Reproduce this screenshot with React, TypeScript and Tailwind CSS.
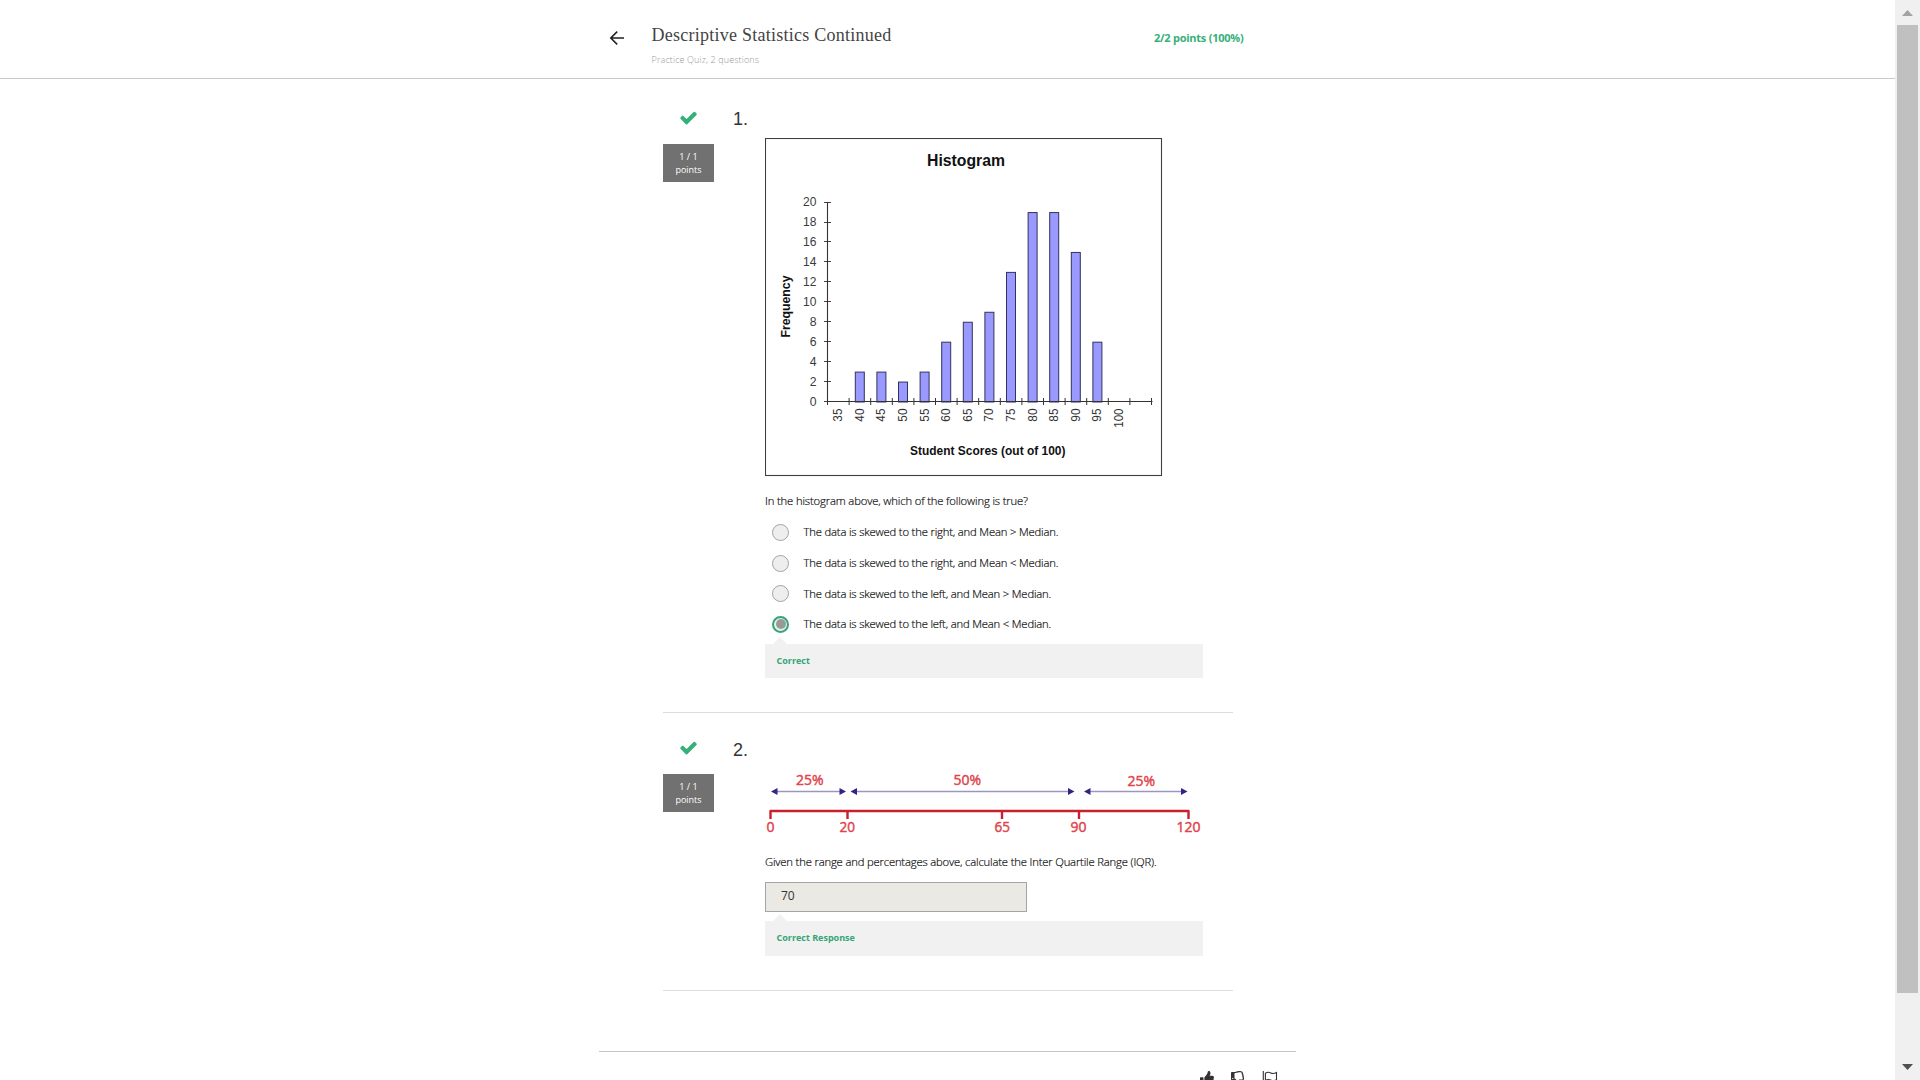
import { FaThumbsUp, FaRegThumbsDown } from "react-icons/fa";

const bars = [0, 3, 3, 2, 3, 6, 8, 9, 13, 19, 19, 15, 6, 0];
const step = 21.6;

function Histogram() {
  const y = (v: number) => 264 - v * 9.97;
  return (
    <svg width="398" height="339" viewBox="0 0 398 339" className="block shrink-0" fontFamily="Liberation Sans, Arial, sans-serif">
      <rect x="0.5" y="0.5" width="396" height="337" fill="#fff" stroke="#3f3f3f" strokeWidth="1.1" />
      <text x="162" y="28" fontSize="16" fontWeight="700" fill="#111" textLength="78" lengthAdjust="spacingAndGlyphs">Histogram</text>
      {Array.from({ length: 11 }, (_, i) => i * 2).map((v) => (
        <g key={v}>
          <path d={`M59 ${Math.round(y(v)) - 0.5}h7`} stroke="#444" strokeWidth="1" />
          <text x="51.5" y={y(v) + 3.5} textAnchor="end" fontSize="13" fill="#3c3c3c" textLength={v > 9 ? 13.4 : 6.8} lengthAdjust="spacingAndGlyphs">{v}</text>
        </g>
      ))}
      {bars.map((v, i) =>
        v ? <rect key={i} x={90.3 + (i - 1) * step} y={y(v)} width="9" height={264 - y(v)} fill="#9999ff" stroke="#33335c" strokeWidth="1" /> : null
      )}
      <path d="M62.5 64V264M62 263.5H387.5" stroke="#333" strokeWidth="1.1" fill="none" />
      {Array.from({ length: 16 }, (_, i) => (
        <path key={i} d={`M${62.5 + i * step} 260v7`} stroke="#333" strokeWidth="1" />
      ))}
      {bars.map((_, i) => (
        <text key={i} transform={`translate(${77.2 + i * step} 270.5) rotate(-90)`} textAnchor="end" fontSize="13" fill="#333" textLength={i === 13 ? 19.3 : 13.2} lengthAdjust="spacingAndGlyphs">{35 + i * 5}</text>
      ))}
      <text transform="translate(24.8 199.5) rotate(-90)" fontSize="12.4" fontWeight="700" fill="#111" textLength="62" lengthAdjust="spacingAndGlyphs">Frequency</text>
      <text x="145" y="317" fontSize="12.4" fontWeight="700" fill="#111" textLength="155.5" lengthAdjust="spacingAndGlyphs">Student Scores (out of 100)</text>
    </svg>
  );
}

function Arrow({ a, b }: { a: number; b: number }) {
  return (
    <g fill="#2e2584">
      <path d={`M${a + 3} 21.5H${b - 3}`} stroke="#9a96c4" strokeWidth="1.7" />
      <path d={`M${a} 21.5l6.5-3.4v6.8zM${b} 21.5l-6.5-3.4v6.8z`} />
    </g>
  );
}

const lineLabels: [string, number, number, number][] = [
  ["25%", 31, 15.3, 27.5], ["50%", 188.5, 14.8, 27.5], ["25%", 362.5, 15.9, 27.5],
  ["0", 1.5, 62.2, 8], ["20", 74.5, 62.2, 15.5], ["65", 229.5, 62.2, 15.5], ["90", 305.5, 62.2, 16], ["120", 411.5, 62.2, 24],
];

function NumberLine() {
  return (
    <svg width="440" height="66" viewBox="0 0 440 66" className="block shrink-0" fontFamily="Open Sans, sans-serif">
      <Arrow a={6} b={81} />
      <Arrow a={85.5} b={309.5} />
      <Arrow a={319} b={422.5} />
      <path d="M5.5 49V41H423.5V49M82.5 41v8M237 41v8M314 41v8" fill="none" stroke="#c8202f" strokeWidth="2.4" strokeLinejoin="round" />
      {lineLabels.map(([t, x, y, w], i) => (
        <text key={i} x={x} y={y} fontSize="14" fill="#e0444c" stroke="#e0444c" strokeWidth="0.45" textLength={w} lengthAdjust="spacingAndGlyphs">{t}</text>
      ))}
    </svg>
  );
}

function Status({ top }: { top: string }) {
  return (
    <div className={`flex w-[51px] shrink-0 flex-col items-center ${top}`}>
      <svg width="17" height="17" viewBox="101 170 1590 1590" className="block shrink-0" fill="#35b078">
        <path d="M1671 566q0 40-28 68l-724 724-136 136q-28 28-68 28t-68-28l-136-136-362-362q-28-28-28-68t28-68l136-136q28-28 68-28t68 28l294 295 656-657q28-28 68-28t68 28l136 136q28 28 28 68z" />
      </svg>
      <div className="mt-[17px] flex h-[38px] w-[51px] flex-col items-center justify-center bg-[#717171] text-[9px] leading-[13px] text-white">
        <span>1 / 1</span>
        <span>points</span>
      </div>
    </div>
  );
}

function Radio({ label, checked }: { label: string; checked?: boolean }) {
  return (
    <label className="flex h-[30.7px] items-center pl-[7px]">
      {checked ? (
        <span className="flex h-[17px] w-[17px] items-center justify-center rounded-full border-2 border-[#35a576] bg-[#e6f0eb]">
          <span className="h-[10px] w-[10px] rounded-full bg-[#999]" />
        </span>
      ) : (
        <span className="h-[17px] w-[17px] rounded-full border border-[#a3a3a3] bg-[#eee]" />
      )}
      <span className="ml-[14.5px] whitespace-nowrap text-[11.25px] leading-4 font-light tracking-[-0.165px] text-[#111] [-webkit-text-stroke:0.2px_#111]">{label}</span>
    </label>
  );
}

function Feedback({ text, height }: { text: string; height: string }) {
  return (
    <div className="flex w-[438px] flex-col">
      <div className="ml-[8px] h-0 w-0 border-x-[7.5px] border-b-[7px] border-x-transparent border-b-[#f1f1f1]" />
      <div className={`flex items-center bg-[#f1f1f1] pb-[1px] pl-[11.5px] text-[9px] font-bold text-[#35a576] ${height}`}>
        <span>{text}</span>
      </div>
    </div>
  );
}

export default function App() {
  return (
    <div className="flex h-[1080px] w-[1920px] overflow-hidden bg-white font-['Open_Sans',sans-serif] text-[#333]">
      <div className="flex min-w-0 flex-1 flex-col">
        <header className="flex h-[79px] shrink-0 border-b border-[#c9c9c9]">
          <svg width="16" height="16" viewBox="0 0 16 16" className="ml-[609px] mt-[29.5px] block" fill="none" stroke="#222" strokeWidth="1.6">
            <path d="M15 8H2M8.2 1.6L1.8 8l6.4 6.4" />
          </svg>
          <div className="ml-[26.500px] flex w-[502.500px] flex-col">
            <h1 className="mt-[23px] whitespace-nowrap font-['Liberation_Serif',serif] text-[18px] leading-6 tracking-[0.25px] text-[#444]">Descriptive Statistics Continued</h1>
            <span className="mt-[7px] text-[9px] leading-3 font-light tracking-[0.13px] text-[#999]">Practice Quiz, 2 questions</span>
          </div>
          <span className="mt-[30px] whitespace-nowrap text-[11px] leading-4 font-bold tracking-[-0.25px] text-[#35b078]">2/2 points (100%)</span>
        </header>
        <main className="flex flex-1 flex-col">
          <section className="ml-[663px] flex h-[634px] w-[570px] border-b border-[#dcdcdc]">
            <Status top="pt-[31px]" />
            <p className="ml-[19px] mt-[28px] w-[32px] shrink-0 font-['Liberation_Sans'] text-[18px] leading-6">1.</p>
            <div className="flex flex-col pt-[59px]">
              <Histogram />
              <p className="mt-[16px] whitespace-nowrap text-[11.25px] leading-4 font-light tracking-[-0.14px] text-[#111] [-webkit-text-stroke:0.2px_#111]">In the histogram above, which of the following is true?</p>
              <div className="mt-[8px] flex flex-col">
                <Radio label="The data is skewed to the right, and Mean &gt; Median." />
                <Radio label="The data is skewed to the right, and Mean &lt; Median." />
                <Radio label="The data is skewed to the left, and Mean &gt; Median." />
                <Radio label="The data is skewed to the left, and Mean &lt; Median." checked />
              </div>
              <div className="mt-[-2.8px]"><Feedback text="Correct" height="h-[34px]" /></div>
            </div>
          </section>
          <section className="ml-[663px] flex h-[278px] w-[570px] border-b border-[#dcdcdc]">
            <Status top="pt-[27px]" />
            <p className="ml-[19px] mt-[25px] w-[32px] shrink-0 font-['Liberation_Sans'] text-[18px] leading-6">2.</p>
            <div className="flex flex-col pt-[57px]">
              <NumberLine />
              <p className="mt-[18px] whitespace-nowrap text-[11.25px] leading-4 font-light tracking-[-0.165px] text-[#111] [-webkit-text-stroke:0.2px_#111]">Given the range and percentages above, calculate the Inter Quartile Range (IQR).</p>
              <div className="mt-[12px] flex h-[30px] w-[262px] items-center border border-[#a5a5a5] bg-[#eae9e4] pb-[2px] pl-[15px] text-[12px]"><span>70</span></div>
              <div className="mt-[2px]"><Feedback text="Correct Response" height="h-[35px]" /></div>
            </div>
          </section>
          <div className="ml-[599px] mt-[60px] flex w-[697px] justify-end gap-[17px] border-t border-[#c4c4c4] pr-[18px] pt-[19px]">
            <FaThumbsUp className="h-[14px] w-[14px] text-[#333]" />
            <FaRegThumbsDown className="h-[14px] w-[14px] text-[#333]" />
            <svg width="16" height="15" viewBox="0 0 16 15" fill="none" stroke="#333" strokeWidth="1.1" className="block">
              <path d="M1.3 0v15" />
              <path d="M3.4 2.2c2-1.2 3.6-1.2 5.3-.3 1.900 1 3.600.7 5.800-.4v7.200c-2.200 1.100-3.900 1.400-5.800.4-1.700-.9-3.300-.9-5.300.3z" />
            </svg>
          </div>
        </main>
      </div>
      <div className="flex w-[25px] shrink-0 flex-col items-center bg-[#f0f0f0]">
        <svg width="11" height="6" viewBox="0 0 11 6" className="mt-[10px] block shrink-0"><path d="M0 6L5.5 0 11 6z" fill="#a3a3a3" /></svg>
        <div className="mt-[9px] h-[968px] w-[21px] shrink-0 bg-[#c0c0c0]" />
        <svg width="11" height="6" viewBox="0 0 11 6" className="mt-[71px] block shrink-0"><path d="M0 0L5.5 6 11 0z" fill="#505050" /></svg>
      </div>
    </div>
  );
}
